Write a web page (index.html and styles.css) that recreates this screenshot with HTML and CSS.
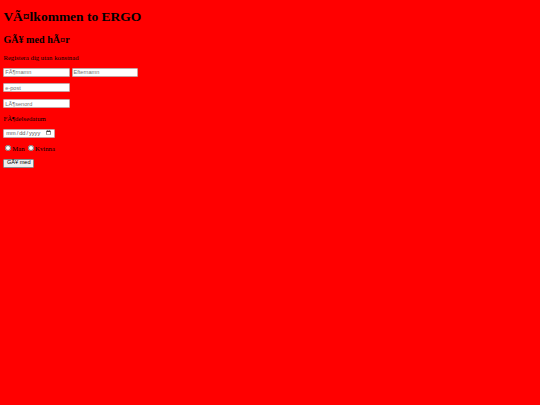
FILE: index.html
```html
<!DOCTYPE html>
<html lang="sv">
<head>
<meta charset="utf-8">
<title>ERGO</title>
<link rel="stylesheet" href="styles.css">
</head>
<body>
<h1 class="title">VÃ¤lkommen to ERGO</h1>
<h2 class="subtitle">GÃ¥ med hÃ¤r</h2>
<p class="text">Registera dig utan konstnad</p>
<form class="signup">
  <p class="row">
    <input class="field" type="text" placeholder="FÃ¶rnamn">
    <input class="field" type="text" placeholder="Efternamn">
  </p>
  <p class="row">
    <input class="field" type="email" placeholder="e-post">
  </p>
  <p class="row">
    <input class="field" type="password" placeholder="LÃ¶senord">
  </p>
  <p class="text">FÃ¶delsedatum</p>
  <p class="row">
    <input class="date" type="date">
  </p>
  <p class="text radios">
    <label class="choice"><input class="radio" type="radio" name="kon">Man</label>
    <label class="choice"><input class="radio" type="radio" name="kon">Kvinna</label>
  </p>
  <p class="row">
    <button class="submit" type="button">GÃ¥ med</button>
  </p>
</form>
</body>
</html>
```
FILE: styles.css
```css
html, body {
  background: #ff0000;
}
body {
  margin: 3.375px;
  font-family: "Liberation Serif", "Times New Roman", serif;
  font-size: 6.75px;
  color: #000;
}
.title {
  font-size: 13.5px;
  margin: 6px 0 9.05px 0;
  font-weight: bold;
}
.subtitle {
  font-size: 10.125px;
  margin: 8.4px 0;
  font-weight: bold;
}
.text {
  font-size: 6.75px;
  margin: 6.75px 0;
}
.signup {
  margin: 0;
}
.row {
  display: flex;
  align-items: center;
  gap: 1.7px;
  margin: 6.75px 0;
}
.field {
  box-sizing: border-box;
  width: 66.5px;
  height: 9px;
  font-family: "Liberation Sans", Arial, sans-serif;
  font-size: 5.625px;
  padding: 0 0.9px;
  border: 1px solid #c9a3a3;
  border-radius: 1px;
  background: #fff;
  margin: 0;
}
.field::placeholder {
  color: #757575;
}
.date {
  box-sizing: border-box;
  width: 52px;
  height: 9px;
  font-family: "Liberation Sans", Arial, sans-serif;
  font-size: 5.625px;
  padding: 0 0.9px;
  border: 1px solid #c9a3a3;
  border-radius: 1px;
  background: #fff;
  margin: 0;
  color: #555;
}
.radios {
  display: flex;
  align-items: center;
  gap: 1.5px;
  height: 7.8px;
}
.choice {
  display: flex;
  align-items: center;
}
.radio {
  width: 5.5px;
  height: 5.5px;
  margin: 0 1.3px 0 2.1px;
}
.submit {
  box-sizing: border-box;
  height: 8.9px;
  font-family: "Liberation Sans", Arial, sans-serif;
  font-size: 5.625px;
  padding: 0 2.5px;
  border: 1px solid #8a8a8a;
  border-radius: 1.3px;
  background: #efefef;
  margin: 0;
  color: #000;
  line-height: 1;
}
```
